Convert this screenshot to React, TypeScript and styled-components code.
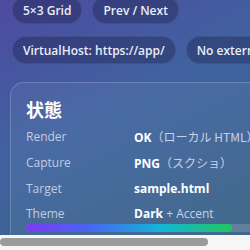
import React from "react";
import styled, { createGlobalStyle } from "styled-components";

const Global = createGlobalStyle`
  html, body { margin: 0; padding: 0; overflow: hidden; background: #ffffff; }
  * { box-sizing: border-box; }
`;

const Frame = styled.div`
  width: 250px;
  height: 250px;
  display: flex;
  flex-direction: column;
  background: #f6f6f6;
`;

const Viewport = styled.div`
  height: 235px;
  overflow: hidden;
  flex: none;
`;

const Canvas = styled.div`
  width: 300px;
  min-height: 100%;
  background: linear-gradient(155deg, #4d4aa0 0%, #4063a0 42%, #36607e 100%);
  padding: 0 10px 0 12px;
  font-family: "Open Sans", "Noto Sans CJK JP", sans-serif;
  color: #eef1fa;
`;

const Rail = styled.div`
  flex: 1;
  display: flex;
  align-items: center;
  padding: 0 0 1px;
  background: #f6f6f6;
`;

const Thumb = styled.div`
  height: 8px;
  border-radius: 4px;
  background: #9b9b9b;
`;

const ChipWrap = styled.div`
  display: flex;
  flex-wrap: wrap;
  gap: 12px 10px;
  margin-top: -4px;
`;

const Chip = styled.span`
  display: inline-flex;
  align-items: center;
  height: 28px;
  padding: 0 10px;
  border-radius: 999px;
  background: rgba(18, 22, 60, 0.32);
  border: 1px solid rgba(255, 255, 255, 0.07);
  font-size: 12px;
  font-weight: 600;
  color: #e9edf8;
  white-space: nowrap;
`;

const Card = styled.section`
  margin: 18px 0 0 -2px;
  border: 1px solid rgba(255, 255, 255, 0.18);
  border-radius: 14px;
  background: rgba(255, 255, 255, 0.05);
  padding: 14px 15px 20px;
`;

const Title = styled.h2`
  margin: 0 0 6px;
  font-size: 18px;
  line-height: 24px;
  font-weight: 700;
  color: #ffffff;
  font-family: "Noto Sans CJK JP", sans-serif;
`;

const Rows = styled.dl`
  margin: 0;
  display: grid;
  grid-template-columns: 108px 1fr;
  row-gap: 6px;
  font-size: 12px;
  line-height: 19px;
`;

const Label = styled.dt`
  color: #c3cbe2;
`;

const Value = styled.dd`
  margin: 0;
  white-space: nowrap;
  color: #c9d1e6;
`;

const Strong = styled.b`
  font-weight: 700;
  color: #ffffff;
`;

const Note = styled.span`
  font-family: "Noto Sans CJK JP", sans-serif;
`;

const Track = styled.div`
  margin-top: 1px;
  height: 8px;
  border-radius: 4px;
  background: rgba(255, 255, 255, 0.16);
  overflow: hidden;
`;

const Fill = styled.div`
  height: 100%;
  border-radius: 4px;
  background: linear-gradient(90deg, #7a3cf2 0%, #4a63f0 30%, #14b4d8 65%, #22c55e 100%);
`;

export default function App() {
  const progress = 83;
  const scrollShare = 83;
  return (
    <>
      <Global />
      <Frame>
        <Viewport>
          <Canvas>
            <ChipWrap>
              <Chip>5×3 Grid</Chip>
              <Chip>Prev / Next</Chip>
              <Chip>VirtualHost: https://app/</Chip>
              <Chip>No external</Chip>
            </ChipWrap>
            <Card>
              <Title>状態</Title>
              <Rows>
                <Label>Render</Label>
                <Value><Strong>OK</Strong><Note>（ローカル HTML）</Note></Value>
                <Label>Capture</Label>
                <Value><Strong>PNG</Strong><Note>（スクショ）</Note></Value>
                <Label>Target</Label>
                <Value><Strong>sample.html</Strong></Value>
                <Label>Theme</Label>
                <Value><Strong>Dark</Strong> + Accent</Value>
              </Rows>
              <Track>
                <Fill style={{ width: `${progress}%` }} />
              </Track>
            </Card>
          </Canvas>
        </Viewport>
        <Rail>
          <Thumb style={{ width: `${scrollShare}%` }} />
        </Rail>
      </Frame>
    </>
  );
}
